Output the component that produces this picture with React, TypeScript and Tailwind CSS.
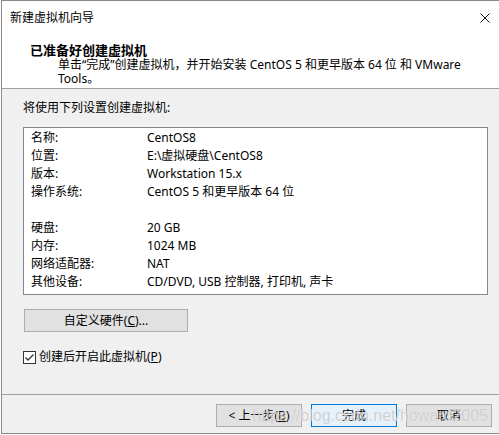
import React from "react";

const font = '"Noto Sans", "Noto Sans CJK SC", sans-serif';

function Btn({ children, primary, className = "" }: { children: React.ReactNode; primary?: boolean; className?: string }) {
  return (
    <div
      className={
        "flex items-center justify-center text-[12px] leading-[16px] text-black " +
        (primary ? "border border-[#0078d7] bg-[#e5f1fb] " : "border border-[#adadad] bg-[#e1e1e1] ") +
        className
      }
    >
      {children}
    </div>
  );
}

const rows: [string, string][] = [
  ["名称:", "CentOS8"],
  ["位置:", "E:\\虚拟硬盘\\CentOS8"],
  ["版本:", "Workstation 15.x"],
  ["操作系统:", "CentOS 5 和更早版本 64 位"],
  ["", ""],
  ["硬盘:", "20 GB"],
  ["内存:", "1024 MB"],
  ["网络适配器:", "NAT"],
  ["其他设备:", "CD/DVD, USB 控制器, 打印机, 声卡"],
];

export default function App() {
  return (
    <div className="w-[499px] h-[435px] bg-white relative overflow-hidden" style={{ fontFamily: font }}>
      <div className="ml-px h-[434px] border-t border-l border-b border-[#8a8a8a] flex flex-col">
        {/* header */}
        <div className="h-[88px] bg-white border-b border-[#a0a0a0] flex flex-col">
          <div className="flex justify-between items-center h-[16px] mt-[9px] pl-[8px] pr-[9px]">
            <span className="text-[12px] leading-[16px] text-black">新建虚拟机向导</span>
            <svg width="10" height="10" viewBox="0 0 10 10" className="block">
              <path d="M0.5 0.5 L9.5 9.5 M9.5 0.5 L0.5 9.5" stroke="#111" strokeWidth="1" fill="none" />
            </svg>
          </div>
          <div className="mt-[16px] pl-[28px] text-[13px] leading-[16px] font-bold text-black">已准备好创建虚拟机</div>
          <div className="pl-[56px] text-[12px] leading-[14px] text-black">
            <div className="whitespace-nowrap">单击“完成”创建虚拟机，并开始安装 CentOS 5 和更早版本 64 位 和 VMware</div>
            <div>Tools。</div>
          </div>
        </div>
        {/* body */}
        <div className="h-[306px] bg-[#f0f0f0] border-b border-[#a0a0a0] flex flex-col pl-[21px]">
          <div className="mt-[11px] text-[12px] leading-[16px] text-black">将使用下列设置创建虚拟机:</div>
          <div className="mt-[11px] w-[465px] h-[168px] bg-white border border-[#828790] pt-px pl-[7px]">
            {rows.map(([k, v], i) => (
              <div key={i} className="flex h-[18px] items-center text-[12px] leading-[16px] text-black">
                <div className="w-[116px] shrink-0">{k}</div>
                <div className="whitespace-nowrap">{v}</div>
              </div>
            ))}
          </div>
          <Btn className="mt-[14px] ml-px w-[164px] h-[23px]">
            <span>
              自定义硬件(<span className="underline">C</span>)...
            </span>
          </Btn>
          <div className="mt-[17px] flex items-center h-[16px]">
            <svg width="13" height="13" viewBox="0 0 13 13" className="block shrink-0">
              <rect x="0.5" y="0.5" width="12" height="12" fill="#fff" stroke="#333" />
              <path d="M2.5 6.5 L5 9 L10.5 3.5" stroke="#333" strokeWidth="1.3" fill="none" />
            </svg>
            <span className="ml-[3px] text-[12px] leading-[16px] text-black">
              创建后开启此虚拟机(<span className="underline">P</span>)
            </span>
          </div>
        </div>
        {/* footer */}
        <div className="flex-1 bg-[#f0f0f0] flex justify-end items-start pt-[9px] pr-[7px] gap-[9px]">
          <Btn className="w-[86px] h-[23px]">
            <span>
              &lt; 上一步(<span className="underline">B</span>)
            </span>
          </Btn>
          <Btn primary className="w-[86px] h-[23px]">
            完成
          </Btn>
          <Btn className="w-[86px] h-[23px]">取消</Btn>
        </div>
      </div>
      <div
        className="absolute right-[11px] top-[408px] text-[16px] leading-[16px] whitespace-nowrap text-[rgba(170,170,170,0.55)] [text-shadow:0_0_1px_rgba(255,255,255,0.9)]"
        style={{ fontFamily: '"Liberation Sans", Arial, sans-serif' }}
      >
        https://blog.csdn.net/howard2005
      </div>
    </div>
  );
}
